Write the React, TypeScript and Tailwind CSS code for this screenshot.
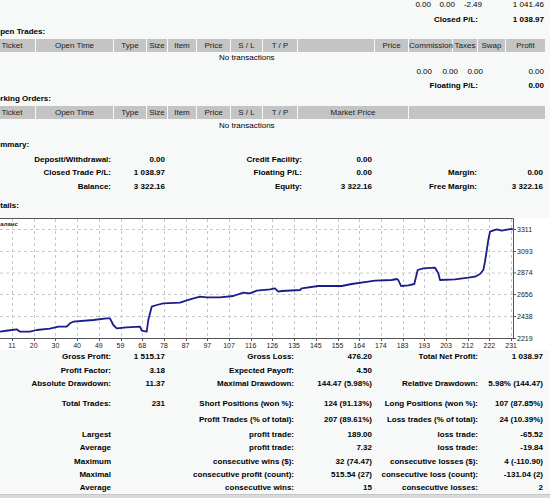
import React from "react";

const HEAD_A: [string, number][] = [
  ["Ticket", 46],
  ["Open Time", 77],
  ["Type", 32],
  ["Size", 20],
  ["Item", 28],
  ["Price", 33],
  ["S / L", 31],
  ["T / P", 34],
];

const HEAD_TRADES: [string, number][] = [
  ...HEAD_A,
  ["", 76],
  ["Price", 33],
  ["Commission", 43],
  ["Taxes", 24],
  ["Swap", 27],
  ["Profit", 39],
];

const HEAD_ORDERS: [string, number][] = [...HEAD_A, ["Market Price", 110], ["", 136]];

const X_LABELS = ["11", "20", "30", "40", "49", "59", "68", "78", "87", "97", "107", "116", "126", "135", "145", "155", "164", "174", "183", "193", "203", "212", "222", "231"];
const Y_LABELS: [string, number][] = [
  ["3311", 11],
  ["3093", 33],
  ["2874", 54.5],
  ["2656", 76],
  ["2438", 98],
  ["2219", 120],
];

const CURVE =
  "0,113.7 8,112.5 16.7,111.3 20,113.7 30,113.7 36.7,112 50,110.7 58.3,108.7 66.7,108.7 70,105.3 73.3,103.7 93.3,102 106.7,100.3 110,100.3 113.3,107 116.7,110.3 126.7,109.3 140,108.7 141.7,112.7 146.7,113.7 148.3,102 151.7,88.7 156.7,87 163.3,85.3 180,84.7 190,81.3 200,78.7 206.7,79.3 220,79.3 233.3,78 243.3,74.7 250,75.3 256.7,72.7 270,71.3 275,70.3 278.3,73.7 281.7,73 300,72 301.7,70.3 318.3,68 341.7,68 351.7,66 368.3,63.7 375,62.7 391.7,62 396.7,61 398.3,62 401,68 408.3,67.3 414.3,66 417.7,52 423.3,50.3 435,49.7 438.3,55.3 440,62 455,61.3 468.3,59.7 475,58.7 480,56 483.3,52 485,43.7 488.3,22 490,13.7 496.7,11.3 501.7,12.7 508.3,11.3 512.7,11";

function HeaderRow({ cols, className }: { cols: [string, number][]; className?: string }) {
  return (
    <div className={`flex h-[13px] -ml-[11px] gap-px text-[#222] ${className ?? ""}`}>
      {cols.map(([t, w], i) => (
        <div key={i} className="flex-none bg-[#c4c4c4] text-center leading-[13px] whitespace-nowrap" style={{ width: w }}>
          {t}
        </div>
      ))}
    </div>
  );
}

// right-aligned cells; text may spill out to the left
function Cells({ cols, className }: { cols: [React.ReactNode, number][]; className?: string }) {
  return (
    <div className={`flex h-[10px] leading-[10px] ${className ?? ""}`}>
      {cols.map(([t, w], i) => (
        <div key={i} className="flex flex-none justify-end whitespace-nowrap" style={{ width: w }}>
          <span className="flex-none">{t}</span>
        </div>
      ))}
    </div>
  );
}

const STAT_W = [111, 54, 129, 78, 106, 65];
const SUM_W = [111, 54, 137, 70, 105, 66];

function Stat({ v, mt }: { v: string[]; mt: string }) {
  return <Cells className={`font-bold ${mt}`} cols={v.map((t, i) => [t, STAT_W[i]])} />;
}

function Chart() {
  const gx = X_LABELS.map((_, i) => 12 + i * 21.7);
  return (
    <svg width={550} height={132} className="mt-[7px] block bg-white">
      {Y_LABELS.slice(0, 5).map(([, y]) => (
        <line key={y} x1={0} x2={513} y1={y + 0.5} y2={y + 0.5} stroke="#c8c8c8" strokeDasharray="3 3" />
      ))}
      {gx.map((x) => (
        <line key={x} x1={Math.round(x) + 0.5} x2={Math.round(x) + 0.5} y1={1} y2={120} stroke="#c8c8c8" strokeDasharray="3 3" />
      ))}
      <polyline points="0,0.5 513.5,0.5 513.5,120.5 0,120.5" fill="none" stroke="#555" strokeWidth={1} />
      {Y_LABELS.map(([t, y]) => (
        <g key={t}>
          <line x1={513} x2={516} y1={y + 0.5} y2={y + 0.5} stroke="#555" />
          <text x={517} y={y + 2.5} fontSize={7} fill="#222">
            {t}
          </text>
        </g>
      ))}
      {X_LABELS.map((t, i) => (
        <g key={t}>
          <line x1={Math.round(gx[i]) + 0.5} x2={Math.round(gx[i]) + 0.5} y1={120} y2={123} stroke="#555" />
          <text x={gx[i]} y={129.5} fontSize={7} fill="#222" textAnchor="middle">
            {t}
          </text>
        </g>
      ))}
      <text x={-4} y={8} fontSize={6} fill="#222" fontWeight="bold">
        Баланс
      </text>
      <polyline points={CURVE} fill="none" stroke="#1c1c8a" strokeWidth={1.8} strokeLinejoin="round" />
    </svg>
  );
}

export default function App() {
  return (
    <div className="w-[550px] h-[498px] overflow-hidden bg-[#f6f9f8] text-black text-[8px] font-['Liberation_Sans',Arial,sans-serif]">
      <Cells cols={[["", 399], ["0.00", 32], ["0.00", 24], ["-2.49", 27], ["1 041.46", 62]]} />
      <Cells className="mt-[5px] font-bold" cols={[["", 400], ["Closed P/L:", 78], ["1 038.97", 66]]} />

      <div className="mt-[2px] h-[10px] leading-[10px] font-bold whitespace-nowrap -ml-[6px]">Open Trades:</div>
      <HeaderRow cols={HEAD_TRADES} className="mt-[2px]" />
      <div className="mt-px h-[10px] leading-[10px] pl-[219px]">No transactions</div>
      <Cells className="mt-[4px]" cols={[["", 400], ["0.00", 32], ["0.00", 26], ["0.00", 25], ["0.00", 61]]} />
      <Cells className="mt-[4px] font-bold" cols={[["", 400], ["Floating P/L:", 78], ["0.00", 66]]} />

      <div className="mt-[3px] h-[10px] leading-[10px] font-bold whitespace-nowrap -ml-[12px]">Working Orders:</div>
      <HeaderRow cols={HEAD_ORDERS} className="mt-[2px]" />
      <div className="mt-[2px] h-[10px] leading-[10px] pl-[219px]">No transactions</div>

      <div className="mt-[9px] h-[10px] leading-[10px] font-bold whitespace-nowrap -ml-[10px]">Summary:</div>
      <Cells className="mt-[5px] font-bold" cols={[["Deposit/Withdrawal:", SUM_W[0]], ["0.00", SUM_W[1]], ["Credit Facility:", SUM_W[2]], ["0.00", SUM_W[3]]]} />
      <Cells
        className="mt-[3px] font-bold"
        cols={[["Closed Trade P/L:", SUM_W[0]], ["1 038.97", SUM_W[1]], ["Floating P/L:", SUM_W[2]], ["0.00", SUM_W[3]], ["Margin:", SUM_W[4]], ["0.00", SUM_W[5]]]}
      />
      <Cells
        className="mt-[4px] font-bold"
        cols={[["Balance:", SUM_W[0]], ["3 322.16", SUM_W[1]], ["Equity:", SUM_W[2]], ["3 322.16", SUM_W[3]], ["Free Margin:", SUM_W[4]], ["3 322.16", SUM_W[5]]]}
      />

      <div className="mt-[9px] h-[10px] leading-[10px] font-bold whitespace-nowrap -ml-[10px]">Details:</div>
      <Chart />

      <Stat mt="mt-[2px]" v={["Gross Profit:", "1 515.17", "Gross Loss:", "476.20", "Total Net Profit:", "1 038.97"]} />
      <Stat mt="mt-[4px]" v={["Profit Factor:", "3.18", "Expected Payoff:", "4.50", "", ""]} />
      <Stat mt="mt-[3px]" v={["Absolute Drawdown:", "11.37", "Maximal Drawdown:", "144.47 (5.98%)", "Relative Drawdown:", "5.98% (144.47)"]} />
      <Stat mt="mt-[10px]" v={["Total Trades:", "231", "Short Positions (won %):", "124 (91.13%)", "Long Positions (won %):", "107 (87.85%)"]} />
      <Stat mt="mt-[6px]" v={["", "", "Profit Trades (% of total):", "207 (89.61%)", "Loss trades (% of total):", "24 (10.39%)"]} />
      <Stat mt="mt-[5px]" v={["Largest", "", "profit trade:", "189.00", "loss trade:", "-65.52"]} />
      <Stat mt="mt-[3px]" v={["Average", "", "profit trade:", "7.32", "loss trade:", "-19.84"]} />
      <Stat mt="mt-[4px]" v={["Maximum", "", "consecutive wins ($):", "32 (74.47)", "consecutive losses ($):", "4 (-110.90)"]} />
      <Stat mt="mt-[3px]" v={["Maximal", "", "consecutive profit (count):", "515.54 (27)", "consecutive loss (count):", "-131.04 (2)"]} />
      <Stat mt="mt-[3px]" v={["Average", "", "consecutive wins:", "15", "consecutive losses:", "2"]} />

      <div className="mt-px h-[10px] border-t border-[#c4c4c4] bg-[#dadada]" />
    </div>
  );
}
